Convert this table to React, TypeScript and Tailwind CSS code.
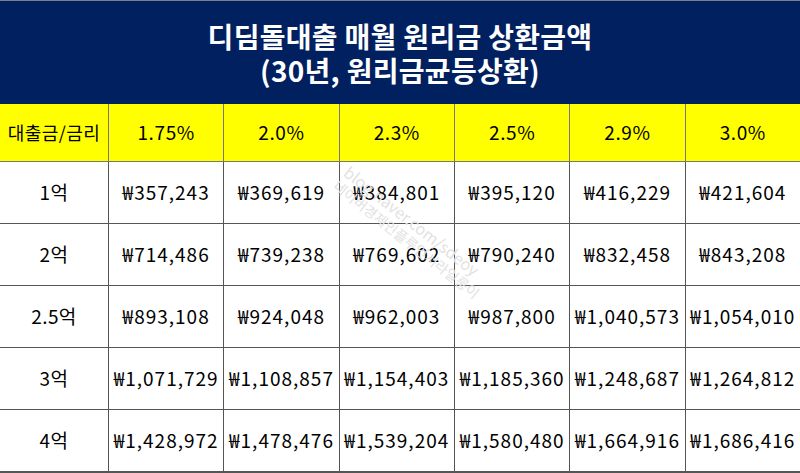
import React from "react";

const rates = ["1.75%", "2.0%", "2.3%", "2.5%", "2.9%", "3.0%"];
const rows: [string, string[]][] = [
  ["1억", ["₩357,243", "₩369,619", "₩384,801", "₩395,120", "₩416,229", "₩421,604"]],
  ["2억", ["₩714,486", "₩739,238", "₩769,602", "₩790,240", "₩832,458", "₩843,208"]],
  ["2.5억", ["₩893,108", "₩924,048", "₩962,003", "₩987,800", "₩1,040,573", "₩1,054,010"]],
  ["3억", ["₩1,071,729", "₩1,108,857", "₩1,154,403", "₩1,185,360", "₩1,248,687", "₩1,264,812"]],
  ["4억", ["₩1,428,972", "₩1,478,476", "₩1,539,204", "₩1,580,480", "₩1,664,916", "₩1,686,416"]],
];

const font = { fontFamily: '"Noto Sans CJK KR", "Noto Sans", sans-serif' };

export default function App() {
  return (
    <div className="relative w-[800px] h-[473px] overflow-hidden bg-white text-black" style={font}>
      <div className="h-[104px] bg-[#002060] border-t border-[#7a7f8c] flex flex-col items-center justify-center text-white font-bold text-[28px] leading-[34px] tracking-[0.3px]">
        <div>디딤돌대출 매월 원리금 상환금액</div>
        <div>(30년, 원리금균등상환)</div>
      </div>
      <div className="grid grid-cols-[108px_repeat(6,1fr)] border-b border-[#555]">
        <div className="h-[58px] bg-[#ffff00] flex items-center justify-center text-[18px] tracking-[0.4px] border-b border-[#777]">대출금/금리</div>
        {rates.map((r) => (
          <div key={r} className="h-[58px] bg-[#ffff00] flex items-center justify-center text-[19px] tracking-[0.6px] border-l border-b border-[#777]">
            {r}
          </div>
        ))}
        {rows.map(([label, vals]) => (
          <React.Fragment key={label}>
            <div className="h-[62px] flex items-center justify-center text-[19px] tracking-[0.4px] border-b border-[#555]">{label}</div>
            {vals.map((v, i) => (
              <div key={i} className="h-[62px] flex items-center justify-center text-[19px] tracking-[1px] whitespace-nowrap border-l border-b border-[#555]">
                {v}
              </div>
            ))}
          </React.Fragment>
        ))}
      </div>
      <div className="absolute left-[322px] top-[214px] rotate-[38deg] origin-center text-[#e2e2e2] text-[16px] leading-[18px] whitespace-nowrap pointer-events-none select-none">
        <div>blog.naver.com/sdeoy</div>
        <div className="text-[14px]">네이버경제인플루언서라일룽이</div>
      </div>
    </div>
  );
}
